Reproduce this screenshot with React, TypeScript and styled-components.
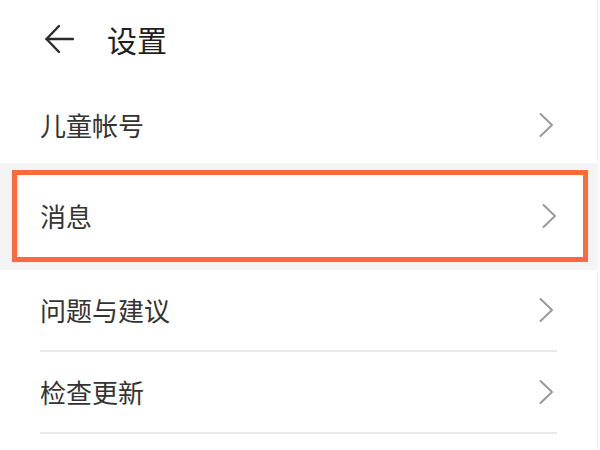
import styled, { createGlobalStyle } from 'styled-components';

const GlobalStyle = createGlobalStyle`
  html, body {
    margin: 0;
    padding: 0;
    background: #ffffff;
  }
  body {
    font-family: "Noto Sans CJK SC", "Noto Sans", sans-serif;
  }
`;

const items = ['儿童帐号', '消息', '问题与建议', '检查更新'];

function Chevron() {
  return (
    <ChevronIcon width="16" height="26" viewBox="0 0 16 26" fill="none">
      <polyline points="2.5,2 14,13 2.5,24" stroke="#9a9a9a" strokeWidth="2" strokeLinecap="round" strokeLinejoin="round" />
    </ChevronIcon>
  );
}

function BackArrow() {
  return (
    <svg width="30" height="30" viewBox="0 0 30 30" fill="none">
      <line x1="2.5" y1="15" x2="29" y2="15" stroke="#2b2b2b" strokeWidth="2.4" strokeLinecap="round" />
      <polyline points="15,2 2.5,15 15,28" stroke="#2b2b2b" strokeWidth="2.4" strokeLinecap="round" strokeLinejoin="round" />
    </svg>
  );
}

export default function App() {
  return (
    <>
      <GlobalStyle />
      <Page>
        <Header>
          <BackArrow />
          <Title>设置</Title>
        </Header>

        <Row>
          <Label>{items[0]}</Label>
          <Chevron />
        </Row>

        <Band>
          <Highlight>
            <Row $inBox>
              <Label>{items[1]}</Label>
              <Chevron />
            </Row>
          </Highlight>
        </Band>

        <Row $divider>
          <Label>{items[2]}</Label>
          <Chevron />
        </Row>
        <Row $divider>
          <Label>{items[3]}</Label>
          <Chevron />
        </Row>
      </Page>
    </>
  );
}

const Page = styled.div`
  width: 597px;
  height: 450px;
  overflow: hidden;
  background: #ffffff;
  border-right: 1px solid #f3f3f3;
`;

const Header = styled.div`
  display: flex;
  align-items: center;
  gap: 33px;
  height: 86px;
  padding: 0 0 8px 44px;
  box-sizing: border-box;
`;

const Title = styled.div`
  font-size: 30px;
  font-weight: 400;
  color: #1f1f1f;
  line-height: 1;
`;

const Row = styled.div<{ $divider?: boolean; $inBox?: boolean }>`
  display: flex;
  align-items: center;
  justify-content: space-between;
  height: ${p => (p.$inBox ? 82 : 77)}px;
  margin: ${p => (p.$inBox ? '0 23px' : '0 40px')};
  padding-right: 3px;
  ${p => p.$divider && `
    height: 80px;
    border-bottom: 2px solid #e8e8e8;
  `}
`;

const Label = styled.span`
  font-size: 26px;
  color: #333333;
  line-height: 1;
`;

const ChevronIcon = styled.svg`
  display: block;
`;

const Band = styled.div`
  background: #f4f4f4;
  padding: 7px 0 8px;
`;

const Highlight = styled.div`
  margin: 0 9px 0 12px;
  border: 5px solid #ff6a3c;
  background: #ffffff;
`;
